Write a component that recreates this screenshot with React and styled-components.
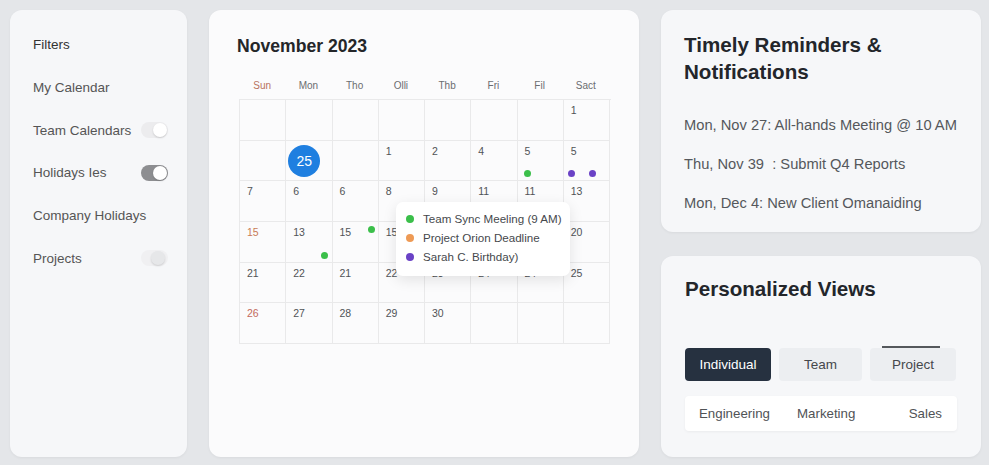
import React from "react"
import styled, { createGlobalStyle } from "styled-components"

const GlobalStyle = createGlobalStyle`
  html, body {
    margin: 0;
    padding: 0;
    background: #e4e6e9;
    font-family: "Liberation Sans", Arial, sans-serif;
  }
`

const Page = styled.div`
  width: 989px;
  height: 465px;
  box-sizing: border-box;
  padding: 10px 7px 8px 10px;
  display: grid;
  grid-template-columns: 177px 430px 320px;
  column-gap: 22px;
  background: #e4e6e9;
`

const Panel = styled.div`
  background: ${props => props.bg || "#f6f7f9"};
  border-radius: 12px;
  box-shadow: 0 1px 3px rgba(0, 0, 0, 0.05);
  box-sizing: border-box;
`

/* ---------- filters ---------- */

const FilterPanel = styled(Panel)`
  padding: 27px 18px 0 23px;
  display: flex;
  flex-direction: column;
`

const FilterTitle = styled.div`
  font-size: 13.5px;
  font-weight: 500;
  color: #333;
  height: 42px;
  line-height: 16px;
`

const FilterRow = styled.div`
  display: flex;
  align-items: center;
  justify-content: space-between;
  height: 42.7px;
  font-size: 13.5px;
  color: #555;
  margin-top: -13px;
  margin-bottom: 13px;
`

const Track = styled.div`
  width: 27px;
  height: 16px;
  border-radius: 8px;
  position: relative;
  background: ${props => props.track};
  margin-right: 1px;
`

const Knob = styled.div`
  position: absolute;
  top: 1px;
  right: ${props => props.right}px;
  width: 14px;
  height: 14px;
  border-radius: 50%;
  background: ${props => props.knob};
  box-shadow: 0 1px 2px rgba(0, 0, 0, 0.15);
`

const Toggle = ({ track, knob, right = 1 }) => (
  <Track track={track}>
    <Knob knob={knob} right={right} />
  </Track>
)

/* ---------- calendar ---------- */

const CalendarPanel = styled(Panel)`
  padding: 26px 28px 0 28px;
  background: #fbfbfc;
`

const MonthTitle = styled.div`
  font-size: 17.6px;
  font-weight: 600;
  color: #242629;
  line-height: 20px;
`

const WeekHeader = styled.div`
  display: grid;
  grid-template-columns: repeat(8, 46.25px);
  margin: 24px 0 0 2px;
  height: 19px;
`

const WeekDay = styled.div`
  text-align: center;
  font-size: 10px;
  color: ${props => (props.sun ? "#b9735f" : "#6b6d70")};
`

const Grid = styled.div`
  position: relative;
  margin-left: 2px;
  display: grid;
  grid-template-columns: repeat(8, 46.25px);
  grid-auto-rows: 40.7px;
  border-top: 1px solid #e9e9ea;
  border-left: 1px solid #e9e9ea;
  width: 371px;
`

const Cell = styled.div`
  position: relative;
  border-right: 1px solid #e9e9ea;
  border-bottom: 1px solid #e9e9ea;
  font-size: 10.5px;
  color: ${props => props.color || "#505356"};
  padding: 4px 0 0 7px;
  box-sizing: border-box;
`

const Today = styled.div`
  position: absolute;
  left: 2px;
  top: 4px;
  width: 32px;
  height: 32px;
  border-radius: 50%;
  background: #1f7fe0;
  color: #fff;
  font-size: 14px;
  display: flex;
  align-items: center;
  justify-content: center;
`

const Dot = styled.span`
  position: absolute;
  left: ${props => props.x}px;
  top: ${props => props.y}px;
  width: 7px;
  height: 7px;
  border-radius: 50%;
  background: ${props => props.color};
`

const Tooltip = styled.div`
  position: absolute;
  left: 156px;
  top: 102px;
  width: 174px;
  height: 74px;
  box-sizing: border-box;
  padding: 10px 0 0 10px;
  background: #fff;
  border-radius: 7px;
  box-shadow: 0 4px 14px rgba(0, 0, 0, 0.1);
  display: flex;
  flex-direction: column;
  gap: 5px;
`

const TipItem = styled.div`
  display: flex;
  align-items: center;
  gap: 9px;
  font-size: 11.6px;
  color: #45484c;
  line-height: 14px;
`

const TipDot = styled.span`
  width: 8px;
  height: 8px;
  border-radius: 50%;
  background: ${props => props.color};
`

const GREEN = "#3bbf4a"
const PURPLE = "#6a42c6"
const ORANGE = "#ee9a55"

const rows = [
  ["", "", "", "", "", "", "", "1"],
  ["", "25", "", "1", "2", "4", "5", "5"],
  ["7", "6", "6", "8", "9", "11", "11", "13"],
  ["15", "13", "15", "15", "", "", "", "20"],
  ["21", "22", "21", "22", "23", "24", "24", "25"],
  ["26", "27", "28", "29", "30", "", "", ""],
]

const dots = {
  "1-6": [{ x: 6, y: 29, c: GREEN }],
  "1-7": [
    { x: 4, y: 29, c: PURPLE },
    { x: 25, y: 29, c: PURPLE },
  ],
  "3-1": [{ x: 35, y: 30, c: GREEN }],
  "3-2": [{ x: 35, y: 4, c: GREEN }],
}

const cellColor = (r, c) => {
  if (r === 3 && c === 0) return "#c97c55"
  if (r === 5 && c === 0) return "#c36a5c"
  return undefined
}

/* ---------- right side ---------- */

const Side = styled.div`
  display: flex;
  flex-direction: column;
  gap: 24px;
`

const RemindersPanel = styled(Panel)`
  height: 222px;
  padding: 21px 16px 0 23px;
`

const ViewsPanel = styled(Panel)`
  flex: 1;
  padding: 19px 24px 0 24px;
`

const SideTitle = styled.div`
  font-size: 20.6px;
  font-weight: 700;
  color: #23262b;
  line-height: 27px;
`

const ReminderList = styled.div`
  margin-top: 32px;
  display: flex;
  flex-direction: column;
  gap: 22px;
`

const Reminder = styled.div`
  font-size: 14.7px;
  color: #55585c;
  line-height: 17px;
`

const Tabs = styled.div`
  display: flex;
  gap: 8px;
  margin-top: 46px;
`

const Tab = styled.div`
  position: relative;
  width: ${props => props.w}px;
  height: 33px;
  border-radius: 4px;
  display: flex;
  align-items: center;
  justify-content: center;
  font-size: 13.5px;
  background: ${props => (props.active ? "#263140" : "#eceef1")};
  color: ${props => (props.active ? "#fff" : "#45484c")};
`

const TabLine = styled.span`
  position: absolute;
  top: -2px;
  left: 12px;
  right: 16px;
  height: 2px;
  background: #55585c;
`

const DeptBar = styled.div`
  margin-top: 15px;
  width: 272px;
  height: 35px;
  background: #fff;
  border-radius: 4px;
  box-shadow: 0 1px 3px rgba(0, 0, 0, 0.05);
  display: flex;
  align-items: center;
  padding: 0 15px 0 14px;
  box-sizing: border-box;
  font-size: 13.3px;
  color: #505356;
`

const Dept = styled.span`
  margin-left: ${props => (props.auto ? "auto" : `${props.ml || 0}px`)};
`

export default function App() {
  return (
    <>
      <GlobalStyle />
      <Page>
        <FilterPanel>
          <FilterTitle>Filters</FilterTitle>
          <FilterRow>My Calendar</FilterRow>
          <FilterRow>
            Team Calendars
            <Toggle track="#ececee" knob="#fff" />
          </FilterRow>
          <FilterRow>
            Holidays Ies
            <Toggle track="#8d8e91" knob="#fff" />
          </FilterRow>
          <FilterRow>Company Holidays</FilterRow>
          <FilterRow>
            Projects
            <Toggle track="#f0f0f2" knob="#e6e7e9" right={3} />
          </FilterRow>
        </FilterPanel>

        <CalendarPanel>
          <MonthTitle>November 2023</MonthTitle>
          <WeekHeader>
            {["Sun", "Mon", "Tho", "Olli", "Thb", "Fri", "Fil", "Sact"].map(
              (d, i) => (
                <WeekDay key={d} sun={i === 0}>
                  {d}
                </WeekDay>
              )
            )}
          </WeekHeader>
          <Grid>
            {rows.map((row, r) =>
              row.map((n, c) => (
                <Cell key={`${r}-${c}`} color={cellColor(r, c)}>
                  {r === 1 && c === 1 ? <Today>25</Today> : n}
                  {(dots[`${r}-${c}`] || []).map((d, i) => (
                    <Dot key={i} x={d.x} y={d.y} color={d.c} />
                  ))}
                </Cell>
              ))
            )}
            <Tooltip>
              <TipItem>
                <TipDot color={GREEN} />
                Team Sync Meeling (9 AM)
              </TipItem>
              <TipItem>
                <TipDot color={ORANGE} />
                Project Orion Deadline
              </TipItem>
              <TipItem>
                <TipDot color={PURPLE} />
                Sarah C. Birthday)
              </TipItem>
            </Tooltip>
          </Grid>
        </CalendarPanel>

        <Side>
          <RemindersPanel>
            <SideTitle>
              Timely Reminders &amp;
              <br />
              Notifications
            </SideTitle>
            <ReminderList>
              <Reminder>Mon, Nov 27: All-hands Meeting @ 10 AM</Reminder>
              <Reminder>Thu, Nov 39&nbsp; : Submit Q4 Reports</Reminder>
              <Reminder>Mon, Dec 4: New Client Omanaiding</Reminder>
            </ReminderList>
          </RemindersPanel>
          <ViewsPanel>
            <SideTitle>Personalized Views</SideTitle>
            <Tabs>
              <Tab active w={86}>
                Individual
              </Tab>
              <Tab w={83}>Team</Tab>
              <Tab w={86}>
                <TabLine />
                Project
              </Tab>
            </Tabs>
            <DeptBar>
              <Dept>Engineering</Dept>
              <Dept ml={27}>Marketing</Dept>
              <Dept auto>Sales</Dept>
            </DeptBar>
          </ViewsPanel>
        </Side>
      </Page>
    </>
  )
}
